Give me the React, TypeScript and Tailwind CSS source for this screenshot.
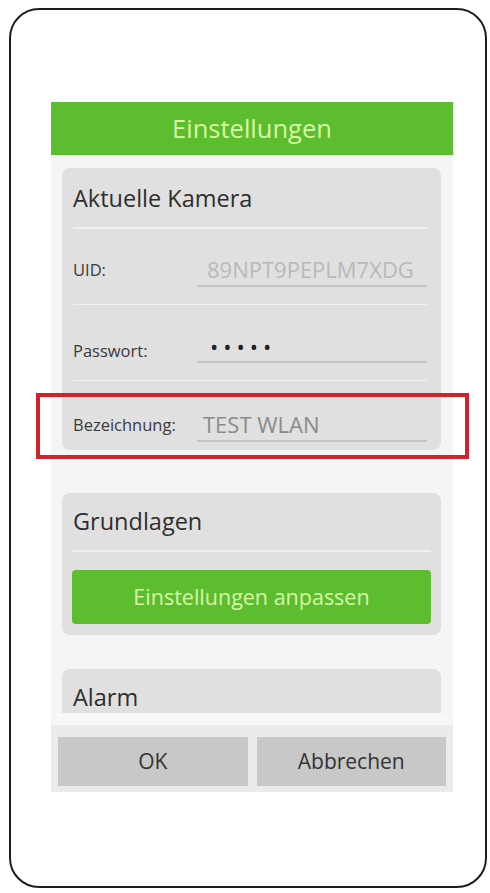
import React from 'react';

type FieldRowProps = {
  label: string;
  value: string;
  labelClass?: string;
  valueClass?: string;
  last?: boolean;
};

const FieldRow: React.FC<FieldRowProps> = ({ label, value, labelClass = '', valueClass = '', last }) => (
  <div className={`flex items-end ${last ? 'h-[69px] pb-[8px]' : 'h-[76px] pb-[17px] border-b border-[#f2f2f2]'}`}>
    <div className={`w-[124px] h-[34px] flex items-center text-[16.5px] text-[#3a3a3a] ${labelClass}`}>{label}</div>
    <div className={`flex-1 h-[34px] flex items-center border-b-2 border-[#c4c4c4] text-[22px] ${valueClass}`}>
      {value}
    </div>
  </div>
);

export default function App() {
  return (
    <div className="w-[490px] h-[893px] bg-white pt-[8px] pl-[9px]" style={{ fontFamily: '"Open Sans", "Noto Sans", sans-serif' }}>
      {/* phone outline */}
      <div className="w-[478px] h-[880px] border-2 border-[#1e1e1e] rounded-[30px] pt-[92px] pl-[40px]">
        <div className="relative w-[402px] bg-[#f5f5f5]">
          <div className="h-[53px] bg-[#5cbd2e] flex items-center justify-center text-[25.5px] text-[#d9f7a6]">
            Einstellungen
          </div>

          <div className="h-[558px] overflow-hidden pl-[11px] pr-[12px] pt-[13px]">
            {/* current camera */}
            <div className="bg-[#e0e0e0] rounded-[8px] pl-[11px] pr-[14px]">
              <div className="h-[61px] flex items-center text-[23.5px] text-[#2e2e2e] border-b-2 border-[#f0f0f0] pt-[2px]">
                Aktuelle Kamera
              </div>
              <FieldRow label="UID:" value="89NPT9PEPLM7XDG" valueClass="text-[#b9b9b9] pl-[10px]" />
              <FieldRow
                label="Passwort:"
                value="•••••"
                labelClass="pt-[10px]"
                valueClass="text-[20px] text-[#222] pl-[13px] tracking-[5px] pt-[2px]"
              />
              <FieldRow label="Bezeichnung:" value="TEST WLAN" valueClass="text-[#8a8a8a] pl-[6px]" last />
            </div>

            {/* basics */}
            <div className="mt-[43px] bg-[#e0e0e0] rounded-[8px] px-[10px] pb-[11px]">
              <div className="h-[59px] flex items-center pl-[1px] text-[23.5px] text-[#2e2e2e] border-b-2 border-[#f0f0f0]">
                Grundlagen
              </div>
              <button className="mt-[18px] w-full h-[54px] bg-[#5cbd2e] rounded-[4px] text-[21.5px] text-[#d9f7a6]">
                Einstellungen anpassen
              </button>
            </div>

            {/* alarm */}
            <div className="mt-[34px] bg-[#e0e0e0] rounded-t-[8px] h-[60px] pl-[11px] pt-[11px] text-[23.5px] text-[#2e2e2e]">
              Alarm
            </div>
          </div>

          <div className="h-[12px] bg-[#f7f7f7]" />
          <div className="h-[67px] bg-[#ebebeb] flex gap-[9px] px-[7px] pt-[12px] pb-[6px]">
            <button className="flex-1 bg-[#c8c8c8] text-[21px] text-[#333]">OK</button>
            <button className="flex-1 bg-[#c8c8c8] text-[21px] text-[#333]">Abbrechen</button>
          </div>

          {/* highlight around the name field */}
          <div className="absolute left-[-15px] right-[-16px] top-[291px] h-[66px] border-4 border-[#d2222b]" />
        </div>
      </div>
    </div>
  );
}
